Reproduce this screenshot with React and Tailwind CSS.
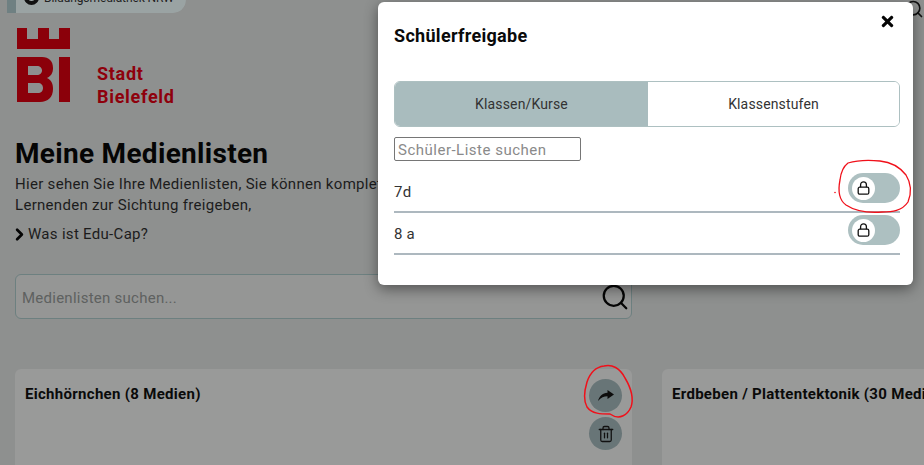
import React from "react";
import { Search, ChevronRight, Trash2 } from "lucide-react";
import { FaTimes } from "react-icons/fa";

const font = "font-['Roboto','Liberation_Sans',sans-serif]";

function LockIcon() {
  return (
    <svg width="13" height="14" viewBox="0 0 13 14" fill="none" stroke="#111" strokeWidth="1.3">
      <rect x="1.200" y="6.200" width="10.600" height="7" rx="1.500" />
      <path d="M3.600 6.200V3.800C3.600 2 4.800 0.800 6.500 0.800C8.200 0.800 9.400 2 9.400 3.800V6.200" />
    </svg>
  );
}

function ShareIcon() {
  return (
    <svg width="16" height="11" viewBox="0 0 16 11" fill="#0c0c0c">
      <path d="M9.500 0L16 4.500L9.500 9V6.300C6 6.300 3 7.500 0 11C1 6.500 4.500 3 9.500 2.700Z" />
    </svg>
  );
}

function Toggle() {
  return (
    <div className="w-[52px] h-[30px] rounded-full bg-[#adc0c1] flex items-center pl-[4px] mt-[1px]">
      <div className="w-[23px] h-[23px] rounded-full bg-white flex items-center justify-center">
        <LockIcon />
      </div>
    </div>
  );
}

function Row({ label, className, labelClass }) {
  return (
    <div className={`flex items-start justify-between border-b-2 border-[#adb8bf] ${className}`}>
      <span className={`text-[15px] leading-[20px] text-[#333] tracking-[0.2px] ${labelClass}`}>{label}</span>
      <Toggle />
    </div>
  );
}

function Round({ children }) {
  return (
    <div className="w-[33px] h-[33px] rounded-full bg-[#687577] flex items-center justify-center text-[#111]">
      {children}
    </div>
  );
}

function Card({ title, actions, className }) {
  return (
    <div className={`h-[110px] rounded-[6px] bg-[#999a99] flex justify-between pl-[10px] pr-[10px] pt-[10px] ${className}`}>
      <span className="text-[15px] font-bold text-[#0a0a0a] whitespace-nowrap leading-[30px] tracking-[0.3px] h-[30px]">{title}</span>
      {actions}
    </div>
  );
}

export default function App() {
  return (
    <div className={`relative w-[924px] h-[465px] overflow-hidden bg-[#8e908f] ${font}`}>
      {/* top tab */}
      <div className="flex h-[13px] ml-[7px] w-[179px] rounded-br-[14px] overflow-hidden">
        <div className="w-[9px] bg-[#6f8082]" />
        <div className="flex-1 bg-[#9aa3a3] rounded-br-[14px] pl-[8px] flex items-end">
          <div className="w-[15px] h-[15px] rounded-full border-[4px] border-[#111] mb-[8px] shrink-0" />
          <span className="text-[12px] leading-[12px] ml-[5px] text-[#222] whitespace-nowrap mb-[9px] tracking-[-0.1px]">Bildungsmediathek NRW</span>
        </div>
      </div>

      <div className="pl-[15px]">
        {/* logo */}
        <div className="flex items-end mt-[15px] ml-[2px] h-[75px]">
          <svg width="53" height="75" viewBox="0 0 53 75" className="block">
            <path d="M0 0H10V11H21V0H32V11H42V0H53V21H0Z" fill="#8b000a" />
            <path fillRule="evenodd" d="M0 29H25C32 29 36 33 36 40C36 45 34 48 30 50C34 52 36 55 36 61C36 69 31 74 23 74H0ZM11 38V47H20C23 47 25 45 25 42.500C25 40 23 38 20 38ZM11 55V65H21C24 65 26 63 26 60C26 57 24 55 21 55Z" fill="#8b000a" />
            <rect x="42" y="29" width="11" height="45" fill="#8b000a" />
          </svg>
          <div className="ml-[27px] text-[18px] leading-[23px] font-bold text-[#8e000c] mb-[-5px] tracking-[0.7px]">
            <div>Stadt</div>
            <div>Bielefeld</div>
          </div>
        </div>

        <h1 className="mt-[33px] text-[28px] leading-[36px] font-bold text-[#050505] tracking-[0.3px]">Meine Medienlisten</h1>
        <p className="text-[15px] leading-[21px] text-[#1c1c1c] h-[42px] mt-[2px] whitespace-nowrap tracking-[0.3px]">
          Hier sehen Sie Ihre Medienlisten, Sie können komplette
          <br />
          Lernenden zur Sichtung freigeben,
        </p>
        <div className="flex items-center mt-[8px] h-[20px] text-[15px] text-[#1c1c1c] tracking-[0.3px]">
          <ChevronRight size={19} strokeWidth={3.4} className="text-[#050505] ml-[-5px] mr-[-1px]" />
          <span>Was ist Edu-Cap?</span>
        </div>

        <div className="mt-[30px] w-[617px] h-[45px] rounded-[6px] border border-[#6d8080] bg-[#959695] flex items-center justify-between pl-[6px]">
          <span className="text-[15px] text-[#5e6160] mt-[3px] tracking-[0.25px]">Medienlisten suchen...</span>
          <Search size={30} strokeWidth={1.8} className="text-[#050505] ml-[-2px] mr-[1px]" />
        </div>

        <div className="flex gap-[30px] mt-[50px]">
          <Card
            className="w-[617px] shrink-0"
            title="Eichhörnchen (8 Medien)"
            actions={
              <div className="flex flex-col gap-[5px]">
                <Round><ShareIcon /></Round>
                <Round><Trash2 size={18} strokeWidth={1.7} /></Round>
              </div>
            }
          />
          <Card className="flex-1" title="Erdbeben / Plattentektonik (30 Medien)" />
        </div>
      </div>

      {/* search icon peeking out beside the dialog */}
      <Search size={20} strokeWidth={2} className="absolute left-[904px] top-[-1px] text-[#111]" />

      {/* dialog */}
      <div className="absolute left-[378px] top-[2px] w-[535px] h-[283px] bg-white rounded-[6px] shadow-[0_4px_14px_rgba(0,0,0,0.45)] px-[16px]">
        <FaTimes size={17} className="absolute right-[17px] top-[11px] text-[#050505]" />
        <h2 className="text-[18px] leading-[24px] font-bold text-[#0a0a0a] mt-[22px] tracking-[0.3px]">Schülerfreigabe</h2>
        <div className="mt-[33px] h-[46px] w-[506px] rounded-[6px] border border-[#adc0c1] flex overflow-hidden text-[14px] text-[#333] tracking-[0.15px]">
          <div className="w-[253px] bg-[#a9bcbe] flex items-center justify-center">Klassen/Kurse</div>
          <div className="flex-1 bg-white flex items-center justify-center">Klassenstufen</div>
        </div>
        <div className="mt-[10px] w-[187px] h-[24px] rounded-[2px] border border-[#767676] flex items-center pl-[3px] text-[15px] text-[#8a8a8a] whitespace-nowrap tracking-[0.5px]">
          <span className="mt-[2px]">Schüler-Liste suchen</span>
        </div>
        <div className="w-[506px] mt-[11px]">
          <Row label="7d" className="h-[41px]" labelClass="mt-[10px]" />
          <Row label="8 a" className="h-[42px] pt-[1px]" labelClass="mt-[10px]" />
        </div>
      </div>

      {/* hand-drawn red marks */}
      <svg className="absolute left-0 top-0 pointer-events-none" width="924" height="465" viewBox="0 0 924 465" fill="none">
        <path d="M848 163C858 160 870 160 880 161C890 162 899 166 906 175C911 183 912 192 908 202C902 211 892 212 882 212C868 213 855 211 846 205C839 200 838 190 840 180C841 171 844 166 848 163Z" stroke="#f0101a" strokeWidth="1.3" />
        <circle cx="835" cy="192.500" r="0.8" fill="#f0101a" />
        <path d="M604 366C612 364 620 368 625 378C631 388 634 398 631 407C628 414 620 421 610 414C601 414 592 414 587 407C583 400 584 392 587 382C590 373 596 367 604 366Z" stroke="#f0101a" strokeWidth="1.5" />
      </svg>
    </div>
  );
}
